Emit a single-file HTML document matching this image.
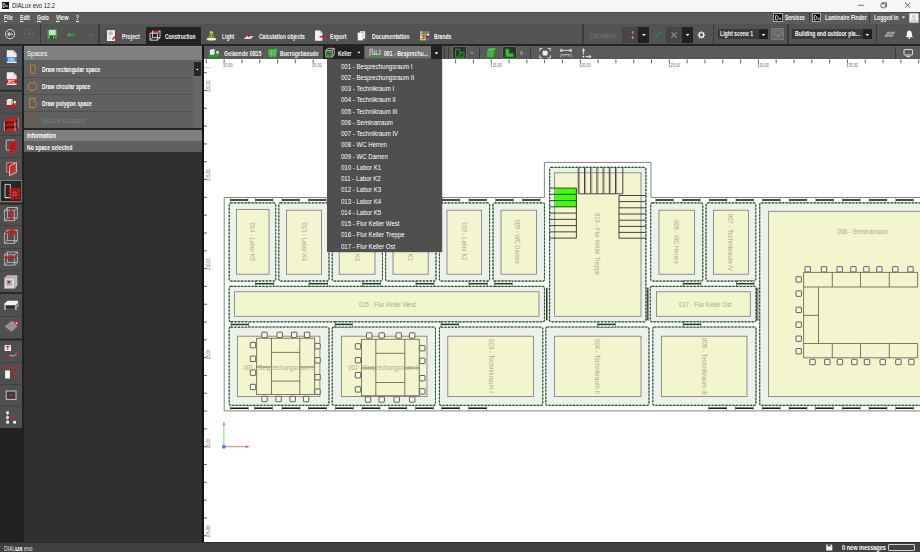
<!DOCTYPE html>
<html lang="en"><head><meta charset="utf-8"><title>DIALux evo 12.2</title>
<style>
html,body{margin:0;padding:0;}
body{width:920px;height:552px;overflow:hidden;position:relative;background:#2e2e2e;font-family:"Liberation Sans",sans-serif;}
.b{position:absolute;}
.t{position:absolute;white-space:nowrap;transform-origin:0 50%;}
svg{position:absolute;left:0;top:0;overflow:visible;}
u{text-decoration:underline;}
</style></head><body>
<div id="canvas" class="b" style="left:203.9px;top:59.3px;width:716.1px;height:482.7px;background:#fff;"></div>
<svg id="plan" width="920" height="552" viewBox="0 0 920 552"><defs><clipPath id="cv"><rect x="203.9" y="59.3" width="716.1" height="482.7"/></clipPath></defs><g clip-path="url(#cv)">
<path d="M224.10 63.3V67.4M313.15 63.3V67.4M402.20 63.3V67.4M491.25 63.3V67.4M580.30 63.3V67.4M669.35 63.3V67.4M758.40 63.3V67.4M847.45 63.3V67.4M936.50 63.3V67.4M206.9 536.15H210.9M206.9 447.10H210.9M206.9 358.05H210.9M206.9 269.00H210.9M206.9 179.95H210.9M206.9 90.90H210.9" stroke="#a4a4a4" stroke-width="1" fill="none"/>
<path d="M188.48 59.4V63.3M206.29 59.4V63.3M224.10 59.4V63.3M241.91 59.4V63.3M259.72 59.4V63.3M277.53 59.4V63.3M295.34 59.4V63.3M313.15 59.4V63.3M330.96 59.4V63.3M348.77 59.4V63.3M366.58 59.4V63.3M384.39 59.4V63.3M402.20 59.4V63.3M420.01 59.4V63.3M437.82 59.4V63.3M455.63 59.4V63.3M473.44 59.4V63.3M491.25 59.4V63.3M509.06 59.4V63.3M526.87 59.4V63.3M544.68 59.4V63.3M562.49 59.4V63.3M580.30 59.4V63.3M598.11 59.4V63.3M615.92 59.4V63.3M633.73 59.4V63.3M651.54 59.4V63.3M669.35 59.4V63.3M687.16 59.4V63.3M704.97 59.4V63.3M722.78 59.4V63.3M740.59 59.4V63.3M758.40 59.4V63.3M776.21 59.4V63.3M794.02 59.4V63.3M811.83 59.4V63.3M829.64 59.4V63.3M847.45 59.4V63.3M865.26 59.4V63.3M883.07 59.4V63.3M900.88 59.4V63.3M918.69 59.4V63.3M936.50 59.4V63.3M203.9 553.56H206.9M203.9 535.75H206.9M203.9 517.94H206.9M203.9 500.13H206.9M203.9 482.32H206.9M203.9 464.51H206.9M203.9 446.70H206.9M203.9 428.89H206.9M203.9 411.08H206.9M203.9 393.27H206.9M203.9 375.46H206.9M203.9 357.65H206.9M203.9 339.84H206.9M203.9 322.03H206.9M203.9 304.22H206.9M203.9 286.41H206.9M203.9 268.60H206.9M203.9 250.79H206.9M203.9 232.98H206.9M203.9 215.17H206.9M203.9 197.36H206.9M203.9 179.55H206.9M203.9 161.74H206.9M203.9 143.93H206.9M203.9 126.12H206.9M203.9 108.31H206.9M203.9 90.50H206.9M203.9 72.69H206.9M203.9 54.88H206.9" stroke="#3a3a3a" stroke-width="0.8" fill="none"/>
<path d="M204 67.7H210.8" stroke="#c4c4c4" stroke-width="0.9"/>
<text x="225.00" y="67.2" font-size="4.5" fill="#707070" textLength="7.6" lengthAdjust="spacingAndGlyphs">0,00</text>
<text x="314.05" y="67.2" font-size="4.5" fill="#707070" textLength="7.6" lengthAdjust="spacingAndGlyphs">5,00</text>
<text x="403.10" y="67.2" font-size="4.5" fill="#707070" textLength="9.6" lengthAdjust="spacingAndGlyphs">10,00</text>
<text x="492.15" y="67.2" font-size="4.5" fill="#707070" textLength="9.6" lengthAdjust="spacingAndGlyphs">15,00</text>
<text x="581.20" y="67.2" font-size="4.5" fill="#707070" textLength="9.6" lengthAdjust="spacingAndGlyphs">20,00</text>
<text x="670.25" y="67.2" font-size="4.5" fill="#707070" textLength="9.6" lengthAdjust="spacingAndGlyphs">25,00</text>
<text x="759.30" y="67.2" font-size="4.5" fill="#707070" textLength="9.6" lengthAdjust="spacingAndGlyphs">30,00</text>
<text x="848.35" y="67.2" font-size="4.5" fill="#707070" textLength="9.6" lengthAdjust="spacingAndGlyphs">35,00</text>
<text x="937.40" y="67.2" font-size="4.5" fill="#707070" textLength="9.6" lengthAdjust="spacingAndGlyphs">40,00</text>
<text transform="translate(210.3 535.15) rotate(-90)" font-size="4.5" fill="#707070" textLength="9.6" lengthAdjust="spacingAndGlyphs">-5,00</text>
<text transform="translate(210.3 446.10) rotate(-90)" font-size="4.5" fill="#707070" textLength="7.6" lengthAdjust="spacingAndGlyphs">0,00</text>
<text transform="translate(210.3 357.05) rotate(-90)" font-size="4.5" fill="#707070" textLength="7.6" lengthAdjust="spacingAndGlyphs">5,00</text>
<text transform="translate(210.3 268.00) rotate(-90)" font-size="4.5" fill="#707070" textLength="9.6" lengthAdjust="spacingAndGlyphs">10,00</text>
<text transform="translate(210.3 178.95) rotate(-90)" font-size="4.5" fill="#707070" textLength="9.6" lengthAdjust="spacingAndGlyphs">15,00</text>
<text transform="translate(210.3 89.90) rotate(-90)" font-size="4.5" fill="#707070" textLength="9.6" lengthAdjust="spacingAndGlyphs">20,00</text>
<path d="M224.2 197.5H544.4V162.4H651V197.5H925V410.9H224.2Z" fill="#fff" stroke="#858585" stroke-width="1"/>
<path d="M230.30 197.30V202.50M247.90 197.30V202.50" stroke="#888" stroke-width="0.7" fill="none"/>
<path d="M230.30 200.00H247.90" stroke="#111" stroke-width="1.5" fill="none"/>
<path d="M255.30 197.30V202.50M272.90 197.30V202.50" stroke="#888" stroke-width="0.7" fill="none"/>
<path d="M255.30 200.00H272.90" stroke="#111" stroke-width="1.5" fill="none"/>
<path d="M282.00 197.30V202.50M299.60 197.30V202.50" stroke="#888" stroke-width="0.7" fill="none"/>
<path d="M282.00 200.00H299.60" stroke="#111" stroke-width="1.5" fill="none"/>
<path d="M308.50 197.30V202.50M326.10 197.30V202.50" stroke="#888" stroke-width="0.7" fill="none"/>
<path d="M308.50 200.00H326.10" stroke="#111" stroke-width="1.5" fill="none"/>
<path d="M335.30 197.30V202.50M352.90 197.30V202.50" stroke="#888" stroke-width="0.7" fill="none"/>
<path d="M335.30 200.00H352.90" stroke="#111" stroke-width="1.5" fill="none"/>
<path d="M362.00 197.30V202.50M379.60 197.30V202.50" stroke="#888" stroke-width="0.7" fill="none"/>
<path d="M362.00 200.00H379.60" stroke="#111" stroke-width="1.5" fill="none"/>
<path d="M388.80 197.30V202.50M406.40 197.30V202.50" stroke="#888" stroke-width="0.7" fill="none"/>
<path d="M388.80 200.00H406.40" stroke="#111" stroke-width="1.5" fill="none"/>
<path d="M415.50 197.30V202.50M433.10 197.30V202.50" stroke="#888" stroke-width="0.7" fill="none"/>
<path d="M415.50 200.00H433.10" stroke="#111" stroke-width="1.5" fill="none"/>
<path d="M442.20 197.30V202.50M459.80 197.30V202.50" stroke="#888" stroke-width="0.7" fill="none"/>
<path d="M442.20 200.00H459.80" stroke="#111" stroke-width="1.5" fill="none"/>
<path d="M469.00 197.30V202.50M486.60 197.30V202.50" stroke="#888" stroke-width="0.7" fill="none"/>
<path d="M469.00 200.00H486.60" stroke="#111" stroke-width="1.5" fill="none"/>
<path d="M495.70 197.30V202.50M513.30 197.30V202.50" stroke="#888" stroke-width="0.7" fill="none"/>
<path d="M495.70 200.00H513.30" stroke="#111" stroke-width="1.5" fill="none"/>
<path d="M522.50 197.30V202.50M540.10 197.30V202.50" stroke="#888" stroke-width="0.7" fill="none"/>
<path d="M522.50 200.00H540.10" stroke="#111" stroke-width="1.5" fill="none"/>
<path d="M655.80 197.30V202.50M673.40 197.30V202.50" stroke="#888" stroke-width="0.7" fill="none"/>
<path d="M655.80 200.00H673.40" stroke="#111" stroke-width="1.5" fill="none"/>
<path d="M682.60 197.30V202.50M700.20 197.30V202.50" stroke="#888" stroke-width="0.7" fill="none"/>
<path d="M682.60 200.00H700.20" stroke="#111" stroke-width="1.5" fill="none"/>
<path d="M709.30 197.30V202.50M726.90 197.30V202.50" stroke="#888" stroke-width="0.7" fill="none"/>
<path d="M709.30 200.00H726.90" stroke="#111" stroke-width="1.5" fill="none"/>
<path d="M736.00 197.30V202.50M753.60 197.30V202.50" stroke="#888" stroke-width="0.7" fill="none"/>
<path d="M736.00 200.00H753.60" stroke="#111" stroke-width="1.5" fill="none"/>
<path d="M762.60 197.30V202.50M780.20 197.30V202.50" stroke="#888" stroke-width="0.7" fill="none"/>
<path d="M762.60 200.00H780.20" stroke="#111" stroke-width="1.5" fill="none"/>
<path d="M789.20 197.30V202.50M806.80 197.30V202.50" stroke="#888" stroke-width="0.7" fill="none"/>
<path d="M789.20 200.00H806.80" stroke="#111" stroke-width="1.5" fill="none"/>
<path d="M815.90 197.30V202.50M833.50 197.30V202.50" stroke="#888" stroke-width="0.7" fill="none"/>
<path d="M815.90 200.00H833.50" stroke="#111" stroke-width="1.5" fill="none"/>
<path d="M842.50 197.30V202.50M860.10 197.30V202.50" stroke="#888" stroke-width="0.7" fill="none"/>
<path d="M842.50 200.00H860.10" stroke="#111" stroke-width="1.5" fill="none"/>
<path d="M869.20 197.30V202.50M886.80 197.30V202.50" stroke="#888" stroke-width="0.7" fill="none"/>
<path d="M869.20 200.00H886.80" stroke="#111" stroke-width="1.5" fill="none"/>
<path d="M895.80 197.30V202.50M913.40 197.30V202.50" stroke="#888" stroke-width="0.7" fill="none"/>
<path d="M895.80 200.00H913.40" stroke="#111" stroke-width="1.5" fill="none"/>
<path d="M230.30 405.30V410.90M248.30 405.30V410.90" stroke="#888" stroke-width="0.7" fill="none"/>
<path d="M230.30 408.20H248.30" stroke="#111" stroke-width="1.5" fill="none"/>
<path d="M254.50 405.30V410.90M272.50 405.30V410.90" stroke="#888" stroke-width="0.7" fill="none"/>
<path d="M254.50 408.20H272.50" stroke="#111" stroke-width="1.5" fill="none"/>
<path d="M282.00 405.30V410.90M300.00 405.30V410.90" stroke="#888" stroke-width="0.7" fill="none"/>
<path d="M282.00 408.20H300.00" stroke="#111" stroke-width="1.5" fill="none"/>
<path d="M308.50 405.30V410.90M326.50 405.30V410.90" stroke="#888" stroke-width="0.7" fill="none"/>
<path d="M308.50 408.20H326.50" stroke="#111" stroke-width="1.5" fill="none"/>
<path d="M335.30 405.30V410.90M353.30 405.30V410.90" stroke="#888" stroke-width="0.7" fill="none"/>
<path d="M335.30 408.20H353.30" stroke="#111" stroke-width="1.5" fill="none"/>
<path d="M362.00 405.30V410.90M380.00 405.30V410.90" stroke="#888" stroke-width="0.7" fill="none"/>
<path d="M362.00 408.20H380.00" stroke="#111" stroke-width="1.5" fill="none"/>
<path d="M388.80 405.30V410.90M406.80 405.30V410.90" stroke="#888" stroke-width="0.7" fill="none"/>
<path d="M388.80 408.20H406.80" stroke="#111" stroke-width="1.5" fill="none"/>
<path d="M415.50 405.30V410.90M433.50 405.30V410.90" stroke="#888" stroke-width="0.7" fill="none"/>
<path d="M415.50 408.20H433.50" stroke="#111" stroke-width="1.5" fill="none"/>
<path d="M441.60 405.30V410.90M459.60 405.30V410.90" stroke="#888" stroke-width="0.7" fill="none"/>
<path d="M441.60 408.20H459.60" stroke="#111" stroke-width="1.5" fill="none"/>
<path d="M468.60 405.30V410.90M486.60 405.30V410.90" stroke="#888" stroke-width="0.7" fill="none"/>
<path d="M468.60 408.20H486.60" stroke="#111" stroke-width="1.5" fill="none"/>
<path d="M708.60 405.30V410.90M726.60 405.30V410.90" stroke="#888" stroke-width="0.7" fill="none"/>
<path d="M708.60 408.20H726.60" stroke="#111" stroke-width="1.5" fill="none"/>
<path d="M735.30 405.30V410.90M753.30 405.30V410.90" stroke="#888" stroke-width="0.7" fill="none"/>
<path d="M735.30 408.20H753.30" stroke="#111" stroke-width="1.5" fill="none"/>
<path d="M762.30 405.30V410.90M780.30 405.30V410.90" stroke="#888" stroke-width="0.7" fill="none"/>
<path d="M762.30 408.20H780.30" stroke="#111" stroke-width="1.5" fill="none"/>
<path d="M789.00 405.30V410.90M807.00 405.30V410.90" stroke="#888" stroke-width="0.7" fill="none"/>
<path d="M789.00 408.20H807.00" stroke="#111" stroke-width="1.5" fill="none"/>
<path d="M815.40 405.30V410.90M833.40 405.30V410.90" stroke="#888" stroke-width="0.7" fill="none"/>
<path d="M815.40 408.20H833.40" stroke="#111" stroke-width="1.5" fill="none"/>
<path d="M842.30 405.30V410.90M860.30 405.30V410.90" stroke="#888" stroke-width="0.7" fill="none"/>
<path d="M842.30 408.20H860.30" stroke="#111" stroke-width="1.5" fill="none"/>
<path d="M869.00 405.30V410.90M887.00 405.30V410.90" stroke="#888" stroke-width="0.7" fill="none"/>
<path d="M869.00 408.20H887.00" stroke="#111" stroke-width="1.5" fill="none"/>
<path d="M895.70 405.30V410.90M913.70 405.30V410.90" stroke="#888" stroke-width="0.7" fill="none"/>
<path d="M895.70 408.20H913.70" stroke="#111" stroke-width="1.5" fill="none"/>
<rect x="229.2" y="202.9" width="46.50" height="78.20" rx="1.6" fill="#edf1ec" stroke="#7c7c7c" stroke-width="0.8"/>
<rect x="229.2" y="202.9" width="46.50" height="78.20" rx="1.6" fill="none" stroke="#126012" stroke-width="1.15" stroke-dasharray="1.9 1.6"/>
<rect x="236.4" y="209.5" width="32.60" height="64.70" fill="#f3f5cf" stroke="#777" stroke-width="0.8"/>
<rect x="278.8" y="202.9" width="50.20" height="78.20" rx="1.6" fill="#edf1ec" stroke="#7c7c7c" stroke-width="0.8"/>
<rect x="278.8" y="202.9" width="50.20" height="78.20" rx="1.6" fill="none" stroke="#126012" stroke-width="1.15" stroke-dasharray="1.9 1.6"/>
<rect x="286.5" y="210.2" width="35.00" height="64.00" fill="#f3f5cf" stroke="#777" stroke-width="0.8"/>
<rect x="332.2" y="202.9" width="50.30" height="78.20" rx="1.6" fill="#edf1ec" stroke="#7c7c7c" stroke-width="0.8"/>
<rect x="332.2" y="202.9" width="50.30" height="78.20" rx="1.6" fill="none" stroke="#126012" stroke-width="1.15" stroke-dasharray="1.9 1.6"/>
<rect x="339.2" y="210.2" width="35.80" height="64.00" fill="#f3f5cf" stroke="#777" stroke-width="0.8"/>
<rect x="385.6" y="202.9" width="50.40" height="78.20" rx="1.6" fill="#edf1ec" stroke="#7c7c7c" stroke-width="0.8"/>
<rect x="385.6" y="202.9" width="50.40" height="78.20" rx="1.6" fill="none" stroke="#126012" stroke-width="1.15" stroke-dasharray="1.9 1.6"/>
<rect x="393" y="210.2" width="35.20" height="64.00" fill="#f3f5cf" stroke="#777" stroke-width="0.8"/>
<rect x="439.4" y="202.9" width="50.20" height="78.20" rx="1.6" fill="#edf1ec" stroke="#7c7c7c" stroke-width="0.8"/>
<rect x="439.4" y="202.9" width="50.20" height="78.20" rx="1.6" fill="none" stroke="#126012" stroke-width="1.15" stroke-dasharray="1.9 1.6"/>
<rect x="447" y="210.2" width="34.60" height="64.00" fill="#f3f5cf" stroke="#777" stroke-width="0.8"/>
<rect x="493" y="202.9" width="51.50" height="78.20" rx="1.6" fill="#edf1ec" stroke="#7c7c7c" stroke-width="0.8"/>
<rect x="493" y="202.9" width="51.50" height="78.20" rx="1.6" fill="none" stroke="#126012" stroke-width="1.15" stroke-dasharray="1.9 1.6"/>
<rect x="501" y="210.2" width="35.60" height="64.00" fill="#f3f5cf" stroke="#777" stroke-width="0.8"/>
<rect x="650.7" y="202.9" width="52.10" height="78.20" rx="1.6" fill="#edf1ec" stroke="#7c7c7c" stroke-width="0.8"/>
<rect x="650.7" y="202.9" width="52.10" height="78.20" rx="1.6" fill="none" stroke="#126012" stroke-width="1.15" stroke-dasharray="1.9 1.6"/>
<rect x="659" y="210.2" width="35.60" height="64.00" fill="#f3f5cf" stroke="#777" stroke-width="0.8"/>
<rect x="706" y="202.9" width="49.80" height="78.20" rx="1.6" fill="#edf1ec" stroke="#7c7c7c" stroke-width="0.8"/>
<rect x="706" y="202.9" width="49.80" height="78.20" rx="1.6" fill="none" stroke="#126012" stroke-width="1.15" stroke-dasharray="1.9 1.6"/>
<rect x="713.6" y="210.2" width="35.00" height="64.00" fill="#f3f5cf" stroke="#777" stroke-width="0.8"/>
<rect x="229.2" y="286.3" width="315.30" height="35.50" rx="1.6" fill="#edf1ec" stroke="#7c7c7c" stroke-width="0.8"/>
<rect x="229.2" y="286.3" width="315.30" height="35.50" rx="1.6" fill="none" stroke="#126012" stroke-width="1.15" stroke-dasharray="1.9 1.6"/>
<rect x="234.6" y="291.8" width="304.40" height="24.50" fill="#f3f5cf" stroke="#777" stroke-width="0.8"/>
<rect x="549.6" y="167.3" width="96.30" height="154.50" rx="1.6" fill="#edf1ec" stroke="#7c7c7c" stroke-width="0.8"/>
<rect x="549.6" y="167.3" width="96.30" height="154.50" rx="1.6" fill="none" stroke="#126012" stroke-width="1.15" stroke-dasharray="1.9 1.6"/>
<rect x="554.7" y="172.8" width="86.30" height="143.50" fill="#f3f5cf" stroke="#777" stroke-width="0.8"/>
<rect x="650.3" y="286.3" width="105.70" height="35.50" rx="1.6" fill="#edf1ec" stroke="#7c7c7c" stroke-width="0.8"/>
<rect x="650.3" y="286.3" width="105.70" height="35.50" rx="1.6" fill="none" stroke="#126012" stroke-width="1.15" stroke-dasharray="1.9 1.6"/>
<rect x="656.6" y="291.8" width="93.70" height="24.50" fill="#f3f5cf" stroke="#777" stroke-width="0.8"/>
<rect x="229.2" y="327" width="99.80" height="78.30" rx="1.6" fill="#edf1ec" stroke="#7c7c7c" stroke-width="0.8"/>
<rect x="229.2" y="327" width="99.80" height="78.30" rx="1.6" fill="none" stroke="#126012" stroke-width="1.15" stroke-dasharray="1.9 1.6"/>
<rect x="237.6" y="336.2" width="82.30" height="60.40" fill="#f3f5cf" stroke="#777" stroke-width="0.8"/>
<rect x="332.2" y="327" width="103.30" height="78.30" rx="1.6" fill="#edf1ec" stroke="#7c7c7c" stroke-width="0.8"/>
<rect x="332.2" y="327" width="103.30" height="78.30" rx="1.6" fill="none" stroke="#126012" stroke-width="1.15" stroke-dasharray="1.9 1.6"/>
<rect x="341.5" y="336.2" width="85.50" height="60.40" fill="#f3f5cf" stroke="#777" stroke-width="0.8"/>
<rect x="439.4" y="327" width="103.40" height="78.30" rx="1.6" fill="#edf1ec" stroke="#7c7c7c" stroke-width="0.8"/>
<rect x="439.4" y="327" width="103.40" height="78.30" rx="1.6" fill="none" stroke="#126012" stroke-width="1.15" stroke-dasharray="1.9 1.6"/>
<rect x="447.8" y="336.2" width="85.80" height="60.40" fill="#f3f5cf" stroke="#777" stroke-width="0.8"/>
<rect x="545.8" y="327" width="103.20" height="78.30" rx="1.6" fill="#edf1ec" stroke="#7c7c7c" stroke-width="0.8"/>
<rect x="545.8" y="327" width="103.20" height="78.30" rx="1.6" fill="none" stroke="#126012" stroke-width="1.15" stroke-dasharray="1.9 1.6"/>
<rect x="554.6" y="336.2" width="86.40" height="60.40" fill="#f3f5cf" stroke="#777" stroke-width="0.8"/>
<rect x="652.8" y="327" width="103.20" height="78.30" rx="1.6" fill="#edf1ec" stroke="#7c7c7c" stroke-width="0.8"/>
<rect x="652.8" y="327" width="103.20" height="78.30" rx="1.6" fill="none" stroke="#126012" stroke-width="1.15" stroke-dasharray="1.9 1.6"/>
<rect x="661.5" y="336.2" width="85.50" height="60.40" fill="#f3f5cf" stroke="#777" stroke-width="0.8"/>
<rect x="759.7" y="202.9" width="170.30" height="202.40" rx="1.6" fill="#edf1ec" stroke="#7c7c7c" stroke-width="0.8"/>
<rect x="759.7" y="202.9" width="170.30" height="202.40" rx="1.6" fill="none" stroke="#126012" stroke-width="1.15" stroke-dasharray="1.9 1.6"/>
<rect x="768.4" y="211.3" width="161.60" height="185.30" fill="#f3f5cf" stroke="#777" stroke-width="0.8"/>
<rect x="255.5" y="281.1" width="18.20" height="5.20" fill="#f2f2f2"/>
<path d="M255.5 281.1V286.3M273.7 281.1V286.3" stroke="#666" stroke-width="0.8" fill="none"/>
<path d="M255.5 283.70H273.7" stroke="#333" stroke-width="1.5" fill="none"/>
<path d="M255.5 281.1H273.7M255.5 286.3H273.7" stroke="#126012" stroke-width="1.15" stroke-dasharray="1.9 1.6" fill="none"/>
<rect x="309" y="281.1" width="18.60" height="5.20" fill="#f2f2f2"/>
<path d="M309 281.1V286.3M327.6 281.1V286.3" stroke="#666" stroke-width="0.8" fill="none"/>
<path d="M309 283.70H327.6" stroke="#333" stroke-width="1.5" fill="none"/>
<path d="M309 281.1H327.6M309 286.3H327.6" stroke="#126012" stroke-width="1.15" stroke-dasharray="1.9 1.6" fill="none"/>
<rect x="362.6" y="281.1" width="17.80" height="5.20" fill="#f2f2f2"/>
<path d="M362.6 281.1V286.3M380.4 281.1V286.3" stroke="#666" stroke-width="0.8" fill="none"/>
<path d="M362.6 283.70H380.4" stroke="#333" stroke-width="1.5" fill="none"/>
<path d="M362.6 281.1H380.4M362.6 286.3H380.4" stroke="#126012" stroke-width="1.15" stroke-dasharray="1.9 1.6" fill="none"/>
<rect x="416" y="281.1" width="18.00" height="5.20" fill="#f2f2f2"/>
<path d="M416 281.1V286.3M434 281.1V286.3" stroke="#666" stroke-width="0.8" fill="none"/>
<path d="M416 283.70H434" stroke="#333" stroke-width="1.5" fill="none"/>
<path d="M416 281.1H434M416 286.3H434" stroke="#126012" stroke-width="1.15" stroke-dasharray="1.9 1.6" fill="none"/>
<rect x="469" y="281.1" width="18.30" height="5.20" fill="#f2f2f2"/>
<path d="M469 281.1V286.3M487.3 281.1V286.3" stroke="#666" stroke-width="0.8" fill="none"/>
<path d="M469 283.70H487.3" stroke="#333" stroke-width="1.5" fill="none"/>
<path d="M469 281.1H487.3M469 286.3H487.3" stroke="#126012" stroke-width="1.15" stroke-dasharray="1.9 1.6" fill="none"/>
<rect x="494.7" y="281.1" width="17.50" height="5.20" fill="#f2f2f2"/>
<path d="M494.7 281.1V286.3M512.2 281.1V286.3" stroke="#666" stroke-width="0.8" fill="none"/>
<path d="M494.7 283.70H512.2" stroke="#333" stroke-width="1.5" fill="none"/>
<path d="M494.7 281.1H512.2M494.7 286.3H512.2" stroke="#126012" stroke-width="1.15" stroke-dasharray="1.9 1.6" fill="none"/>
<rect x="683.2" y="281.1" width="17.60" height="5.20" fill="#f2f2f2"/>
<path d="M683.2 281.1V286.3M700.8 281.1V286.3" stroke="#666" stroke-width="0.8" fill="none"/>
<path d="M683.2 283.70H700.8" stroke="#333" stroke-width="1.5" fill="none"/>
<path d="M683.2 281.1H700.8M683.2 286.3H700.8" stroke="#126012" stroke-width="1.15" stroke-dasharray="1.9 1.6" fill="none"/>
<rect x="736.5" y="281.1" width="17.50" height="5.20" fill="#f2f2f2"/>
<path d="M736.5 281.1V286.3M754 281.1V286.3" stroke="#666" stroke-width="0.8" fill="none"/>
<path d="M736.5 283.70H754" stroke="#333" stroke-width="1.5" fill="none"/>
<path d="M736.5 281.1H754M736.5 286.3H754" stroke="#126012" stroke-width="1.15" stroke-dasharray="1.9 1.6" fill="none"/>
<rect x="231" y="321.8" width="17.60" height="5.20" fill="#f2f2f2"/>
<path d="M231 321.8V327M248.6 321.8V327" stroke="#666" stroke-width="0.8" fill="none"/>
<path d="M231 324.40H248.6" stroke="#333" stroke-width="1.5" fill="none"/>
<path d="M231 321.8H248.6M231 327H248.6" stroke="#126012" stroke-width="1.15" stroke-dasharray="1.9 1.6" fill="none"/>
<rect x="335" y="321.8" width="17.30" height="5.20" fill="#f2f2f2"/>
<path d="M335 321.8V327M352.3 321.8V327" stroke="#666" stroke-width="0.8" fill="none"/>
<path d="M335 324.40H352.3" stroke="#333" stroke-width="1.5" fill="none"/>
<path d="M335 321.8H352.3M335 327H352.3" stroke="#126012" stroke-width="1.15" stroke-dasharray="1.9 1.6" fill="none"/>
<rect x="441" y="321.8" width="17.60" height="5.20" fill="#f2f2f2"/>
<path d="M441 321.8V327M458.6 321.8V327" stroke="#666" stroke-width="0.8" fill="none"/>
<path d="M441 324.40H458.6" stroke="#333" stroke-width="1.5" fill="none"/>
<path d="M441 321.8H458.6M441 327H458.6" stroke="#126012" stroke-width="1.15" stroke-dasharray="1.9 1.6" fill="none"/>
<rect x="597.7" y="321.8" width="17.60" height="5.20" fill="#f2f2f2"/>
<path d="M597.7 321.8V327M615.3 321.8V327" stroke="#666" stroke-width="0.8" fill="none"/>
<path d="M597.7 324.40H615.3" stroke="#333" stroke-width="1.5" fill="none"/>
<path d="M597.7 321.8H615.3M597.7 327H615.3" stroke="#126012" stroke-width="1.15" stroke-dasharray="1.9 1.6" fill="none"/>
<rect x="683.2" y="321.8" width="17.60" height="5.20" fill="#f2f2f2"/>
<path d="M683.2 321.8V327M700.8 321.8V327" stroke="#666" stroke-width="0.8" fill="none"/>
<path d="M683.2 324.40H700.8" stroke="#333" stroke-width="1.5" fill="none"/>
<path d="M683.2 321.8H700.8M683.2 327H700.8" stroke="#126012" stroke-width="1.15" stroke-dasharray="1.9 1.6" fill="none"/>
<path d="M545.6 288.2H548.6M545.6 320H548.6" stroke="#666" stroke-width="0.8" fill="none"/>
<path d="M546.60 288.2V320" stroke="#222" stroke-width="1.1" fill="none"/>
<path d="M547.70 288.2V320" stroke="#8a8a8a" stroke-width="1" fill="none"/>
<path d="M646.1 288.2H649.5M646.1 320H649.5" stroke="#666" stroke-width="0.8" fill="none"/>
<path d="M647.30 288.2V320" stroke="#222" stroke-width="1.1" fill="none"/>
<path d="M648.40 288.2V320" stroke="#8a8a8a" stroke-width="1" fill="none"/>
<path d="M755.8 288.2H759.1M755.8 320H759.1" stroke="#666" stroke-width="0.8" fill="none"/>
<path d="M756.95 288.2V320" stroke="#222" stroke-width="1.1" fill="none"/>
<path d="M758.05 288.2V320" stroke="#8a8a8a" stroke-width="1" fill="none"/>
<rect x="555.2" y="188.2" width="21.2" height="18.8" fill="#3fff00"/>
<path d="M549.6 188.10H576.4M549.6 194.35H576.4M549.6 200.60H576.4M549.6 206.85H576.4M549.6 213.10H576.4M549.6 219.35H576.4M549.6 225.60H576.4M549.6 231.85H576.4M549.6 238.10H576.4M576.4 188.1V238.1M578.30 167.3V193.8M584.50 167.3V193.8M590.70 167.3V193.8M596.90 167.3V193.8M603.10 167.3V193.8M609.30 167.3V193.8M615.50 167.3V193.8M622.8 167.3V193.8M578.3 193.8H622.8M619 195.5H645.9M619 201.6H645.9M619 207.8H645.9M619 214H645.9M619 220.2H645.9M619 226.4H645.9M619 232.4H645.9M619 238.2H645.9M619 195.5V238.2" stroke="#303030" stroke-width="0.9" fill="none"/>
<path d="M579.40 167.3V193.8M585.60 167.3V193.8M591.80 167.3V193.8M598.00 167.3V193.8M604.20 167.3V193.8M610.40 167.3V193.8M616.60 167.3V193.8" stroke="#8a8a8a" stroke-width="0.8" fill="none"/>
<rect x="261.80" y="332.20" width="5.4" height="5.4" rx="0.5" fill="#f6f6ea" stroke="#48483c" stroke-width="0.85"/>
<rect x="277.00" y="332.20" width="5.4" height="5.4" rx="0.5" fill="#f6f6ea" stroke="#48483c" stroke-width="0.85"/>
<rect x="291.50" y="332.20" width="5.4" height="5.4" rx="0.5" fill="#f6f6ea" stroke="#48483c" stroke-width="0.85"/>
<rect x="304.40" y="332.20" width="5.4" height="5.4" rx="0.5" fill="#f6f6ea" stroke="#48483c" stroke-width="0.85"/>
<rect x="250.30" y="342.40" width="5.4" height="5.4" rx="0.5" fill="#f6f6ea" stroke="#48483c" stroke-width="0.85"/>
<rect x="250.30" y="356.10" width="5.4" height="5.4" rx="0.5" fill="#f6f6ea" stroke="#48483c" stroke-width="0.85"/>
<rect x="250.30" y="370.00" width="5.4" height="5.4" rx="0.5" fill="#f6f6ea" stroke="#48483c" stroke-width="0.85"/>
<rect x="250.30" y="384.30" width="5.4" height="5.4" rx="0.5" fill="#f6f6ea" stroke="#48483c" stroke-width="0.85"/>
<rect x="314.80" y="343.40" width="5.4" height="5.4" rx="0.5" fill="#f6f6ea" stroke="#48483c" stroke-width="0.85"/>
<rect x="314.80" y="357.60" width="5.4" height="5.4" rx="0.5" fill="#f6f6ea" stroke="#48483c" stroke-width="0.85"/>
<rect x="314.80" y="374.50" width="5.4" height="5.4" rx="0.5" fill="#f6f6ea" stroke="#48483c" stroke-width="0.85"/>
<rect x="314.80" y="389.00" width="5.4" height="5.4" rx="0.5" fill="#f6f6ea" stroke="#48483c" stroke-width="0.85"/>
<rect x="261.80" y="396.30" width="5.4" height="5.4" rx="0.5" fill="#f6f6ea" stroke="#48483c" stroke-width="0.85"/>
<rect x="275.90" y="396.30" width="5.4" height="5.4" rx="0.5" fill="#f6f6ea" stroke="#48483c" stroke-width="0.85"/>
<rect x="290.00" y="396.30" width="5.4" height="5.4" rx="0.5" fill="#f6f6ea" stroke="#48483c" stroke-width="0.85"/>
<rect x="303.40" y="396.30" width="5.4" height="5.4" rx="0.5" fill="#f6f6ea" stroke="#48483c" stroke-width="0.85"/>
<rect x="256.7" y="338.2" width="58.00" height="56.40" fill="#f3f5cf" stroke="#5a5a4a" stroke-width="0.8"/>
<path d="M271.5 338.2V394.6M299.8 338.2V394.6M271.5 352.4H299.8M271.5 381.1H299.8M256.7 367H271.5M299.8 367H314.7" stroke="#5a5a4a" stroke-width="0.8" fill="none"/>
<rect x="366.50" y="332.80" width="5.4" height="5.4" rx="0.5" fill="#f6f6ea" stroke="#48483c" stroke-width="0.85"/>
<rect x="379.00" y="332.80" width="5.4" height="5.4" rx="0.5" fill="#f6f6ea" stroke="#48483c" stroke-width="0.85"/>
<rect x="396.00" y="332.80" width="5.4" height="5.4" rx="0.5" fill="#f6f6ea" stroke="#48483c" stroke-width="0.85"/>
<rect x="409.50" y="332.80" width="5.4" height="5.4" rx="0.5" fill="#f6f6ea" stroke="#48483c" stroke-width="0.85"/>
<rect x="355.30" y="343.70" width="5.4" height="5.4" rx="0.5" fill="#f6f6ea" stroke="#48483c" stroke-width="0.85"/>
<rect x="355.30" y="357.50" width="5.4" height="5.4" rx="0.5" fill="#f6f6ea" stroke="#48483c" stroke-width="0.85"/>
<rect x="355.30" y="372.50" width="5.4" height="5.4" rx="0.5" fill="#f6f6ea" stroke="#48483c" stroke-width="0.85"/>
<rect x="355.30" y="386.70" width="5.4" height="5.4" rx="0.5" fill="#f6f6ea" stroke="#48483c" stroke-width="0.85"/>
<rect x="419.60" y="345.50" width="5.4" height="5.4" rx="0.5" fill="#f6f6ea" stroke="#48483c" stroke-width="0.85"/>
<rect x="419.60" y="358.20" width="5.4" height="5.4" rx="0.5" fill="#f6f6ea" stroke="#48483c" stroke-width="0.85"/>
<rect x="419.60" y="375.50" width="5.4" height="5.4" rx="0.5" fill="#f6f6ea" stroke="#48483c" stroke-width="0.85"/>
<rect x="419.60" y="388.70" width="5.4" height="5.4" rx="0.5" fill="#f6f6ea" stroke="#48483c" stroke-width="0.85"/>
<rect x="365.30" y="396.80" width="5.4" height="5.4" rx="0.5" fill="#f6f6ea" stroke="#48483c" stroke-width="0.85"/>
<rect x="379.00" y="396.80" width="5.4" height="5.4" rx="0.5" fill="#f6f6ea" stroke="#48483c" stroke-width="0.85"/>
<rect x="394.00" y="396.80" width="5.4" height="5.4" rx="0.5" fill="#f6f6ea" stroke="#48483c" stroke-width="0.85"/>
<rect x="409.50" y="396.80" width="5.4" height="5.4" rx="0.5" fill="#f6f6ea" stroke="#48483c" stroke-width="0.85"/>
<rect x="361.6" y="339.2" width="57.60" height="56.60" fill="#f3f5cf" stroke="#5a5a4a" stroke-width="0.8"/>
<path d="M375.8 339.2V395.8M404.8 339.2V395.8M375.8 353.3H404.8M375.8 382.5H404.8M361.6 368H375.8M404.8 368H419.2" stroke="#5a5a4a" stroke-width="0.8" fill="none"/>
<rect x="805.00" y="266.60" width="5.4" height="5.4" rx="0.5" fill="#f6f6ea" stroke="#48483c" stroke-width="0.85"/>
<rect x="821.30" y="266.60" width="5.4" height="5.4" rx="0.5" fill="#f6f6ea" stroke="#48483c" stroke-width="0.85"/>
<rect x="837.00" y="266.60" width="5.4" height="5.4" rx="0.5" fill="#f6f6ea" stroke="#48483c" stroke-width="0.85"/>
<rect x="850.70" y="266.60" width="5.4" height="5.4" rx="0.5" fill="#f6f6ea" stroke="#48483c" stroke-width="0.85"/>
<rect x="863.70" y="266.60" width="5.4" height="5.4" rx="0.5" fill="#f6f6ea" stroke="#48483c" stroke-width="0.85"/>
<rect x="876.70" y="266.60" width="5.4" height="5.4" rx="0.5" fill="#f6f6ea" stroke="#48483c" stroke-width="0.85"/>
<rect x="892.60" y="266.60" width="5.4" height="5.4" rx="0.5" fill="#f6f6ea" stroke="#48483c" stroke-width="0.85"/>
<rect x="907.80" y="266.60" width="5.4" height="5.4" rx="0.5" fill="#f6f6ea" stroke="#48483c" stroke-width="0.85"/>
<rect x="796.00" y="276.70" width="5.4" height="5.4" rx="0.5" fill="#f6f6ea" stroke="#48483c" stroke-width="0.85"/>
<rect x="796.00" y="290.90" width="5.4" height="5.4" rx="0.5" fill="#f6f6ea" stroke="#48483c" stroke-width="0.85"/>
<rect x="796.00" y="307.20" width="5.4" height="5.4" rx="0.5" fill="#f6f6ea" stroke="#48483c" stroke-width="0.85"/>
<rect x="796.00" y="322.00" width="5.4" height="5.4" rx="0.5" fill="#f6f6ea" stroke="#48483c" stroke-width="0.85"/>
<rect x="796.00" y="336.00" width="5.4" height="5.4" rx="0.5" fill="#f6f6ea" stroke="#48483c" stroke-width="0.85"/>
<rect x="796.00" y="348.50" width="5.4" height="5.4" rx="0.5" fill="#f6f6ea" stroke="#48483c" stroke-width="0.85"/>
<rect x="809.80" y="359.30" width="5.4" height="5.4" rx="0.5" fill="#f6f6ea" stroke="#48483c" stroke-width="0.85"/>
<rect x="824.60" y="359.30" width="5.4" height="5.4" rx="0.5" fill="#f6f6ea" stroke="#48483c" stroke-width="0.85"/>
<rect x="837.20" y="359.30" width="5.4" height="5.4" rx="0.5" fill="#f6f6ea" stroke="#48483c" stroke-width="0.85"/>
<rect x="851.70" y="359.30" width="5.4" height="5.4" rx="0.5" fill="#f6f6ea" stroke="#48483c" stroke-width="0.85"/>
<rect x="864.30" y="359.30" width="5.4" height="5.4" rx="0.5" fill="#f6f6ea" stroke="#48483c" stroke-width="0.85"/>
<rect x="880.00" y="359.30" width="5.4" height="5.4" rx="0.5" fill="#f6f6ea" stroke="#48483c" stroke-width="0.85"/>
<rect x="895.70" y="359.30" width="5.4" height="5.4" rx="0.5" fill="#f6f6ea" stroke="#48483c" stroke-width="0.85"/>
<rect x="908.70" y="359.30" width="5.4" height="5.4" rx="0.5" fill="#f6f6ea" stroke="#48483c" stroke-width="0.85"/>
<path d="M803.6 272.4H917.6V287H818.5V343.5H917.6V357.8H803.6Z" fill="#f3f5cf" stroke="#5a5a4a" stroke-width="0.8"/>
<path d="M832.3 272.4V287M860.5 272.4V287M889.3 272.4V287M832.3 343.5V357.8M860.5 343.5V357.8M889.3 343.5V357.8M803.6 287H818.5M803.6 343.5H818.5M803.6 315.4H818.5" stroke="#5a5a4a" stroke-width="0.8" fill="none"/>
<text transform="translate(249.50 222.5) rotate(90)" font-size="6.9" fill="#abac80" textLength="38.50" lengthAdjust="spacingAndGlyphs">014 - Labor K5</text>
<text transform="translate(301.50 222.5) rotate(90)" font-size="6.9" fill="#abac80" textLength="38.50" lengthAdjust="spacingAndGlyphs">013 - Labor K4</text>
<text transform="translate(354.50 222.5) rotate(90)" font-size="6.9" fill="#abac80" textLength="38.50" lengthAdjust="spacingAndGlyphs">012 - Labor K3</text>
<text transform="translate(407.50 222.5) rotate(90)" font-size="6.9" fill="#abac80" textLength="38.50" lengthAdjust="spacingAndGlyphs">011 - Labor K2</text>
<text transform="translate(461.50 222.5) rotate(90)" font-size="6.9" fill="#abac80" textLength="38.00" lengthAdjust="spacingAndGlyphs">010 - Labor K1</text>
<text transform="translate(515.30 219.5) rotate(90)" font-size="6.9" fill="#abac80" textLength="44.30" lengthAdjust="spacingAndGlyphs">009 - WC Damen</text>
<text transform="translate(594.50 213) rotate(90)" font-size="6.9" fill="#abac80" textLength="62.00" lengthAdjust="spacingAndGlyphs">016 - Flur Keller Treppe</text>
<text transform="translate(673.50 220) rotate(90)" font-size="6.9" fill="#abac80" textLength="43.80" lengthAdjust="spacingAndGlyphs">008 - WC Herren</text>
<text transform="translate(728.30 213.8) rotate(90)" font-size="6.9" fill="#abac80" textLength="57.20" lengthAdjust="spacingAndGlyphs">007 - Technikraum IV</text>
<text x="359" y="306.50" font-size="6.9" fill="#abac80" textLength="57.00" lengthAdjust="spacingAndGlyphs">015 - Flur Keller West</text>
<text x="679" y="306.50" font-size="6.9" fill="#abac80" textLength="52.50" lengthAdjust="spacingAndGlyphs">017 - Flur Keller Ost</text>
<text x="243.5" y="369.50" font-size="6.9" fill="#abac80" textLength="69.50" lengthAdjust="spacingAndGlyphs">001 - Besprechungsraum I</text>
<text x="348.5" y="369.50" font-size="6.9" fill="#abac80" textLength="70.00" lengthAdjust="spacingAndGlyphs">002 - Besprechungsraum II</text>
<text transform="translate(488.50 339) rotate(90)" font-size="6.9" fill="#abac80" textLength="54.00" lengthAdjust="spacingAndGlyphs">003 - Technikraum I</text>
<text transform="translate(594.50 339) rotate(90)" font-size="6.9" fill="#abac80" textLength="55.00" lengthAdjust="spacingAndGlyphs">004 - Technikraum II</text>
<text transform="translate(702.00 338) rotate(90)" font-size="6.9" fill="#abac80" textLength="57.00" lengthAdjust="spacingAndGlyphs">005 - Technikraum III</text>
<text x="837.5" y="233.50" font-size="6.9" fill="#abac80" textLength="50.50" lengthAdjust="spacingAndGlyphs">006 - Seminarraum</text>
<path d="M223.9 446.7V423.5" stroke="#86c86a" stroke-width="0.9"/><path d="M222.3 425.6L223.9 421.2L225.5 425.6Z" fill="#86c86a"/>
<path d="M223.9 446.7H247" stroke="#e46a6a" stroke-width="0.9"/><path d="M245.6 445.2L249.8 446.7L245.6 448.2Z" fill="#e46a6a"/>
<circle cx="223.9" cy="446.7" r="2" fill="#3c86f0"/>
</g></svg>
<div id="titlebar" class="b" style="left:0;top:0;width:920px;height:11.5px;background:#f6f6f6;">
<div class="b" style="left:1.60px;top:2.20px;width:7.20px;height:6.60px;background:#0a0a0a;"></div>
<svg width="20" height="12" viewBox="0 0 20 12"><path d="M3 3.4V7.3H3.9C5.8 7.3 5.8 3.4 3.9 3.4Z" fill="none" stroke="#fff" stroke-width="0.8"/><path d="M6.2 5.2L7.8 7.3M7.8 5.2L6.2 7.3" stroke="#fff" stroke-width="0.6"/></svg>
<span class="t" style="left:12.10px;top:1.80px;font-size:7px;line-height:8.40px;color:#1a1a1a;transform:scaleX(0.8309);">DIALux evo 12.2</span>
<svg width="920" height="12" viewBox="0 0 920 12"><g stroke="#333" stroke-width="0.7" fill="none"><path d="M858 5.3H863.8"/><rect x="881" y="3.6" width="4.4" height="4.2" rx="1"/><path d="M882.2 3.6V2.8H886.5V6.8H885.4"/><path d="M905 2.7L910.2 7.8M910.2 2.7L905 7.8"/></g></svg>
</div>
<div id="menubar" class="b" style="left:0;top:11.5px;width:920px;height:12px;background:#5c5c5c;box-sizing:border-box;border-top:0.6px solid #4a4a4a;">
</div>
<span class="t" style="left:3.50px;top:13.54px;font-size:6.6px;line-height:7.92px;color:#f6f6f6;font-weight:bold;transform:scaleX(0.7697);"><u>F</u>ile</span>
<span class="t" style="left:20.00px;top:13.54px;font-size:6.6px;line-height:7.92px;color:#f6f6f6;font-weight:bold;transform:scaleX(0.7822);"><u>E</u>dit</span>
<span class="t" style="left:36.90px;top:13.54px;font-size:6.6px;line-height:7.92px;color:#f6f6f6;font-weight:bold;transform:scaleX(0.7698);"><u>G</u>oto</span>
<span class="t" style="left:56.00px;top:13.54px;font-size:6.6px;line-height:7.92px;color:#f6f6f6;font-weight:bold;transform:scaleX(0.8378);"><u>V</u>iew</span>
<span class="t" style="left:76.00px;top:13.54px;font-size:6.6px;line-height:7.92px;color:#f6f6f6;font-weight:bold;transform:scaleX(0.6822);"><u>?</u></span>
<div class="b" style="left:808.90px;top:12.50px;width:0.70px;height:10.50px;background:#3a3a3a;"></div>
<div class="b" style="left:869.20px;top:12.50px;width:0.70px;height:10.50px;background:#3a3a3a;"></div>
<div class="b" style="left:773.30px;top:13.30px;width:9.40px;height:8.70px;background:#0c0c0c;box-sizing:border-box;border:0.8px solid #a8a8a8;"></div>
<svg width="920" height="30" viewBox="0 0 920 30"><path d="M775.6 15.6V20H776.6C778.7 20 778.7 15.6 776.6 15.6Z" fill="none" stroke="#fff" stroke-width="0.8"/><path d="M779.2 17.6L780.9 20M780.9 17.6L779.2 20" stroke="#fff" stroke-width="0.6"/></svg>
<div class="b" style="left:812.00px;top:13.30px;width:9.40px;height:8.70px;background:#0c0c0c;box-sizing:border-box;border:0.8px solid #a8a8a8;"></div>
<svg width="920" height="30" viewBox="0 0 920 30"><path d="M814.3 15.6V20H815.3C817.4 20 817.4 15.6 815.3 15.6Z" fill="none" stroke="#fff" stroke-width="0.8"/><path d="M817.9 17.6L819.6 20M819.6 17.6L817.9 20" stroke="#fff" stroke-width="0.6"/></svg>
<span class="t" style="left:785.40px;top:13.54px;font-size:6.6px;line-height:7.92px;color:#f6f6f6;font-weight:bold;transform:scaleX(0.7291);">Services</span>
<span class="t" style="left:824.50px;top:13.54px;font-size:6.6px;line-height:7.92px;color:#f6f6f6;font-weight:bold;transform:scaleX(0.7789);">Luminaire Finder</span>
<span class="t" style="left:873.70px;top:13.54px;font-size:6.6px;line-height:7.92px;color:#f6f6f6;font-weight:bold;transform:scaleX(0.7740);">Logged in</span>
<svg width="920" height="60" viewBox="0 0 920 60"><path d="M901.6 16.6h3.6l-1.8 2z" fill="#eee"/><rect x="909.3" y="13.3" width="9.2" height="9.2" fill="#f2f2f2"/><ellipse cx="913.9" cy="16.6" rx="1.9" ry="2.2" fill="#d2d2d2"/><path d="M910.2 22.5c0-3 1.8-3.7 3.7-3.7s3.7 0.7 3.7 3.7z" fill="#d2d2d2"/></svg>
<div id="toolbar" class="b" style="left:0;top:23.5px;width:920px;height:21px;background:#535353;"></div>
<div class="b" style="left:0.00px;top:44.30px;width:920.00px;height:1.40px;background:#242424;"></div>
<div class="b" style="left:39.80px;top:23.80px;width:1.40px;height:20.40px;background:#3c3c3c;"></div>
<div class="b" style="left:98.30px;top:23.80px;width:1.40px;height:20.40px;background:#3c3c3c;"></div>
<div class="b" style="left:582.40px;top:23.80px;width:1.40px;height:20.40px;background:#3c3c3c;"></div>
<div class="b" style="left:713.10px;top:23.80px;width:1.40px;height:20.40px;background:#3c3c3c;"></div>
<div class="b" style="left:787.30px;top:23.80px;width:1.40px;height:20.40px;background:#3c3c3c;"></div>
<div class="b" style="left:875.60px;top:23.80px;width:1.40px;height:20.40px;background:#3c3c3c;"></div>
<div class="b" style="left:145.70px;top:26.60px;width:55.10px;height:17.40px;background:#232323;"></div>
<span class="t" style="left:122.20px;top:33.34px;font-size:6.6px;line-height:7.92px;color:#f6f6f6;font-weight:bold;transform:scaleX(0.7956);">Project</span>
<span class="t" style="left:165.40px;top:33.34px;font-size:6.6px;line-height:7.92px;color:#f6f6f6;font-weight:bold;transform:scaleX(0.7404);">Construction</span>
<span class="t" style="left:221.50px;top:33.34px;font-size:6.6px;line-height:7.92px;color:#f6f6f6;font-weight:bold;transform:scaleX(0.7504);">Light</span>
<span class="t" style="left:258.90px;top:33.34px;font-size:6.6px;line-height:7.92px;color:#f6f6f6;font-weight:bold;transform:scaleX(0.7586);">Calculation objects</span>
<span class="t" style="left:330.20px;top:33.34px;font-size:6.6px;line-height:7.92px;color:#f6f6f6;font-weight:bold;transform:scaleX(0.7846);">Export</span>
<span class="t" style="left:371.50px;top:33.34px;font-size:6.6px;line-height:7.92px;color:#f6f6f6;font-weight:bold;transform:scaleX(0.7787);">Documentation</span>
<span class="t" style="left:434.30px;top:33.34px;font-size:6.6px;line-height:7.92px;color:#f6f6f6;font-weight:bold;transform:scaleX(0.7652);">Brands</span>
<span class="t" style="left:589.40px;top:31.50px;font-size:6.5px;line-height:7.80px;color:#787878;transform:scaleX(0.8334);">Calculation</span>
<div class="b" style="left:622.00px;top:26.90px;width:16.10px;height:15.70px;background:#454545;"></div>
<div class="b" style="left:638.00px;top:26.90px;width:11.20px;height:15.80px;background:#222;"></div>
<div class="b" style="left:666.10px;top:26.90px;width:15.90px;height:15.70px;background:#454545;"></div>
<div class="b" style="left:682.00px;top:26.90px;width:11.30px;height:15.80px;background:#222;"></div>
<div class="b" style="left:717.60px;top:28.90px;width:41.00px;height:10.40px;background:#3a3a3a;"></div>
<div class="b" style="left:758.60px;top:28.90px;width:9.80px;height:10.40px;background:#222;"></div>
<span class="t" style="left:720.00px;top:30.24px;font-size:6.6px;line-height:7.92px;color:#f6f6f6;font-weight:bold;transform:scaleX(0.7872);">Light scene 1</span>
<div class="b" style="left:771.30px;top:27.80px;width:12.70px;height:11.90px;background:#666;box-sizing:border-box;border:0.7px solid #7a7a7a;"></div>
<div class="b" style="left:792.20px;top:28.90px;width:70.40px;height:10.40px;background:#3a3a3a;"></div>
<div class="b" style="left:862.60px;top:28.90px;width:9.60px;height:10.40px;background:#222;"></div>
<span class="t" style="left:794.80px;top:30.24px;font-size:6.6px;line-height:7.92px;color:#f6f6f6;font-weight:bold;transform:scaleX(0.7777);">Building and outdoor pla...</span>
<div id="strip" class="b" style="left:0;top:45.7px;width:22.2px;height:496.3px;background:#222;"></div>
<div class="b" style="left:0.00px;top:45.70px;width:22.20px;height:382.80px;background:#4f4f4f;"></div>
<div id="panel" class="b" style="left:23.9px;top:45.8px;width:178px;height:496.2px;background:#303030;"></div>
<div class="b" style="left:22.20px;top:45.70px;width:1.70px;height:496.30px;background:#202020;"></div>
<div class="b" style="left:201.90px;top:45.70px;width:2.10px;height:496.30px;background:#141414;"></div>
<div class="b" style="left:23.90px;top:45.80px;width:178.00px;height:13.90px;background:#808080;box-sizing:border-box;border-top:0.6px solid #8c8c8c;"></div>
<span class="t" style="left:27.20px;top:48.80px;font-size:7.5px;line-height:9.00px;color:#fff;transform:scaleX(0.8115);">Spaces</span>
<div class="b" style="left:23.90px;top:59.70px;width:178.00px;height:68.00px;background:#606060;"></div>
<div class="b" style="left:192.50px;top:59.70px;width:9.40px;height:68.00px;background:#676767;"></div>
<div class="b" style="left:23.90px;top:77.15px;width:168.60px;height:0.70px;background:#505050;"></div>
<div class="b" style="left:23.90px;top:94.25px;width:168.60px;height:0.70px;background:#505050;"></div>
<div class="b" style="left:23.90px;top:111.25px;width:168.60px;height:0.70px;background:#505050;"></div>
<div class="b" style="left:194.30px;top:62.00px;width:6.30px;height:14.40px;background:#262626;"></div>
<span class="t" style="left:41.70px;top:65.84px;font-size:6.6px;line-height:7.92px;color:#fff;font-weight:bold;transform:scaleX(0.7856);">Draw rectangular space</span>
<span class="t" style="left:41.70px;top:82.84px;font-size:6.6px;line-height:7.92px;color:#fff;font-weight:bold;transform:scaleX(0.7777);">Draw circular space</span>
<span class="t" style="left:41.70px;top:99.74px;font-size:6.6px;line-height:7.92px;color:#fff;font-weight:bold;transform:scaleX(0.7791);">Draw polygon space</span>
<span class="t" style="left:41.70px;top:116.50px;font-size:6.5px;line-height:7.80px;color:#7c7c7c;transform:scaleX(0.8227);">Exclude subspace</span>
<div class="b" style="left:23.90px;top:127.90px;width:178.00px;height:2.00px;background:#262626;"></div>
<div class="b" style="left:23.90px;top:129.90px;width:178.00px;height:11.10px;background:#808080;"></div>
<span class="t" style="left:26.90px;top:132.04px;font-size:6.6px;line-height:7.92px;color:#fff;font-weight:bold;transform:scaleX(0.8018);">Information</span>
<div class="b" style="left:23.90px;top:141.00px;width:178.00px;height:11.40px;background:#606060;"></div>
<span class="t" style="left:26.90px;top:143.84px;font-size:6.6px;line-height:7.92px;color:#fff;font-weight:bold;transform:scaleX(0.7883);">No space selected</span>
<div id="crumbs" class="b" style="left:203.8px;top:45.9px;width:716.2px;height:13.2px;background:#5a5a5a;"></div>
<div class="b" style="left:322.90px;top:45.70px;width:41.00px;height:13.20px;background:#222;"></div>
<div class="b" style="left:364.90px;top:45.90px;width:66.10px;height:12.30px;background:#707070;"></div>
<div class="b" style="left:431.00px;top:45.70px;width:10.70px;height:13.40px;background:#222;"></div>
<span class="t" style="left:224.00px;top:49.52px;font-size:6.3px;line-height:7.56px;color:#f4f4f4;font-weight:bold;transform:scaleX(0.8522);">Gelaende 0815</span>
<span class="t" style="left:280.00px;top:49.52px;font-size:6.3px;line-height:7.56px;color:#f4f4f4;font-weight:bold;transform:scaleX(0.8108);">Buerogebaeude</span>
<span class="t" style="left:337.60px;top:49.52px;font-size:6.3px;line-height:7.56px;color:#f4f4f4;font-weight:bold;transform:scaleX(0.7710);">Keller</span>
<span class="t" style="left:384.20px;top:49.52px;font-size:6.3px;line-height:7.56px;color:#f4f4f4;font-weight:bold;transform:scaleX(0.8161);">001 - Besprechu...</span>
<div class="b" style="left:444.30px;top:46.50px;width:0.70px;height:12.50px;background:#3a3a3a;"></div>
<div class="b" style="left:447.70px;top:46.50px;width:0.70px;height:12.50px;background:#3a3a3a;"></div>
<div class="b" style="left:479.00px;top:46.50px;width:0.70px;height:12.50px;background:#3a3a3a;"></div>
<div class="b" style="left:529.80px;top:46.50px;width:0.70px;height:12.50px;background:#3a3a3a;"></div>
<div class="b" style="left:894.80px;top:46.50px;width:0.70px;height:12.50px;background:#3a3a3a;"></div>
<div class="b" style="left:451.60px;top:45.70px;width:15.80px;height:13.50px;background:#303030;box-sizing:border-box;border:0.8px solid #6a6a6a;"></div>
<div class="b" style="left:501.70px;top:45.70px;width:15.60px;height:13.50px;background:#303030;box-sizing:border-box;border:0.8px solid #6a6a6a;"></div>
<svg id="icons" width="920" height="552" viewBox="0 0 920 552">
<circle cx="10.1" cy="34.1" r="4.6" fill="none" stroke="#f2f2f2" stroke-width="0.8"/><path d="M13 34.1H8M9.8 32.2L7.6 34.1L9.8 36" stroke="#fff" stroke-width="1" fill="none"/>
<circle cx="28.8" cy="34.1" r="4.6" fill="none" stroke="#6c6c6c" stroke-width="0.8"/><path d="M26 34.1H31M29.2 32.4L31.2 34.1L29.2 35.8" stroke="#6c6c6c" stroke-width="0.9" fill="none"/>
<rect x="47.5" y="29.4" width="9.3" height="9.3" rx="0.8" fill="#35b335"/><rect x="49.1" y="29.9" width="6.6" height="5" fill="#d4d8d4"/><rect x="50.2" y="36.2" width="4.7" height="2.4" fill="#2d2d2d"/><rect x="52.9" y="36.6" width="1.1" height="1.6" fill="#ddd"/>
<path d="M66.5 35.6L69.4 32.3L69.6 33.9C72.4 33.2 74.7 34.2 75.8 36.4C73.9 35.2 72 35.1 69.9 35.6L70.2 37.1Z" fill="#37b337"/>
<path d="M93.7 35.9L91 33L90.8 34.3C88.6 33.6 86.4 33.4 85.3 34C87 34.2 88.8 34.9 90.5 35.8L90.2 37Z" fill="#3c7a3c"/>
<rect x="107" y="30.2" width="8" height="10.8" fill="#f1f1f1"/><rect x="108.4" y="31.6" width="4.2" height="3.4" fill="#bdbdbd"/><rect x="108.4" y="36" width="3" height="3.6" fill="#dcdcdc"/><path d="M117.3 34.4L112.9 39" stroke="#e0141e" stroke-width="1.5" stroke-linecap="round"/>
<path d="M150 33.2L152.6 30.6H160L157.4 33.2Z" fill="#d01818"/><path d="M150 33.2H157.4V40.2H150ZM157.4 33.2L160 30.6V37.6L157.4 40.2M152.6 30.6V37.6H160M152.6 37.6L150 40.2" fill="none" stroke="#f4f4f4" stroke-width="0.8"/>
<ellipse cx="211.4" cy="38.9" rx="4.7" ry="1.5" fill="#f6f2b8"/><path d="M208.6 37.5L210 32.6H212.6L214.8 37.5Z" fill="#6f9a2a"/><path d="M209.8 33.4L210.2 31.2H212.4L213.4 33.4Z" fill="#f2d81a"/><path d="M210.6 36.8L211.3 34.4L212.6 36.8Z" fill="#e08a1a"/>
<path d="M243.9 38.9L247 36H253.7L250.6 38.9Z" fill="#dedede"/><path d="M248.9 32V36.6" stroke="#d01818" stroke-width="1.2"/><path d="M247.5 35.6H250.3L248.9 37.6Z" fill="#d01818"/>
<path d="M315 30.5H320.2L322.4 32.8V40.7H315Z" fill="#f0f0f0"/><path d="M320.2 30.5V32.8H322.4Z" fill="#bcbcbc"/><path d="M319.6 36.8H323.6" stroke="#e0141e" stroke-width="1.5"/><path d="M323.2 34.6L326.1 36.8L323.2 39Z" fill="#e0141e"/>
<rect x="360" y="31.2" width="5.2" height="7.6" fill="#e9e9e9"/><rect x="357.8" y="32.6" width="5.2" height="7.7" fill="#f6f6f6" stroke="#9a9a9a" stroke-width="0.5"/>
<rect x="420.00" y="31.20" width="2.7" height="2" fill="#bdbdbd"/>
<rect x="420.00" y="33.60" width="2.7" height="2" fill="#cfcfcf"/>
<rect x="420.00" y="36.00" width="2.7" height="2" fill="#d8d8d8"/>
<rect x="420.00" y="38.40" width="2.7" height="2" fill="#f0de1a"/>
<rect x="423.30" y="31.20" width="2.7" height="2" fill="#3dbb3d"/>
<rect x="423.30" y="33.60" width="2.7" height="2" fill="#e8a11a"/>
<rect x="423.30" y="36.00" width="2.7" height="2" fill="#e87d1a"/>
<rect x="423.30" y="38.40" width="2.7" height="2" fill="#c8c8c8"/>
<rect x="426.60" y="31.20" width="2.7" height="2" fill="#8a8a8a"/>
<rect x="426.60" y="33.60" width="2.7" height="2" fill="#e6e6e6"/>
<rect x="426.60" y="36.00" width="2.7" height="2" fill="#d82020"/>
<rect x="426.60" y="38.40" width="2.7" height="2" fill="#1f7fe6"/>
<path d="M628.4 33.2L632 32M628.4 38.4L632 37.2" stroke="#a83030" stroke-width="1"/><path d="M632.8 31.2V33.8M632.8 36.1V38.9" stroke="#c8c8c8" stroke-width="1"/>
<path d="M642.0 33.9H645.8L643.9 36Z" fill="#fff"/>
<path d="M685.7 33.9H689.5L687.6 36Z" fill="#fff"/>
<path d="M761.6 33.9H765.4L763.5 36Z" fill="#fff"/>
<path d="M865.4 33.9H869.1999999999999L867.3 36Z" fill="#fff"/>
<path d="M654.3 37.6L657.4 33.2L661.2 31.8L659.6 35.4L655.8 37.2M656.4 34.2L658.6 36.4" stroke="#3f7f3f" stroke-width="1" fill="none"/>
<path d="M671.4 32.2L676.7 37.6M676.7 32.2L671.4 37.6" stroke="#7c7c7c" stroke-width="1.5"/>
<circle cx="701.4" cy="34.9" r="2.2" fill="none" stroke="#fff" stroke-width="1.1"/>
<path d="M704.00 34.90L705.10 34.90" stroke="#fff" stroke-width="1.1"/>
<path d="M703.24 36.74L704.02 37.52" stroke="#fff" stroke-width="1.1"/>
<path d="M701.40 37.50L701.40 38.60" stroke="#fff" stroke-width="1.1"/>
<path d="M699.56 36.74L698.78 37.52" stroke="#fff" stroke-width="1.1"/>
<path d="M698.80 34.90L697.70 34.90" stroke="#fff" stroke-width="1.1"/>
<path d="M699.56 33.06L698.78 32.28" stroke="#fff" stroke-width="1.1"/>
<path d="M701.40 32.30L701.40 31.20" stroke="#fff" stroke-width="1.1"/>
<path d="M703.24 33.06L704.02 32.28" stroke="#fff" stroke-width="1.1"/>
<rect x="774.6" y="30.4" width="6.6" height="4.6" rx="0.6" fill="none" stroke="#8a8a8a" stroke-width="0.8"/><path d="M776.4 36.4H779.4" stroke="#8a8a8a" stroke-width="0.8"/>
<path d="M884.3 37L887.2 31.8H895.3L892.4 37Z" fill="#9c9c9c"/><path d="M886 34.4H893.8M888.4 37L891.2 31.8" stroke="#666" stroke-width="0.4"/>
<path d="M905.7 37.2C907 36 906.8 34.6 906.9 33.4C907 31.6 908.1 30.6 909.35 30.6C910.6 30.6 911.7 31.6 911.8 33.4C911.9 34.6 911.7 36 913 37.2Z" fill="#fff"/><circle cx="909.35" cy="38.1" r="0.9" fill="#fff"/>
<path d="M207.5 56.9L210.6 54.3L221 52.9L218.2 56.9Z" fill="#14a514"/><path d="M209.9 50.4L211.1 49.2H214.9V53.6L213.7 54.8H209.9Z" fill="#f0f0f0"/><path d="M213.7 50.4L214.9 49.2V53.6L213.7 54.8Z" fill="#b4b4b4"/><circle cx="217.5" cy="52.2" r="1.3" fill="#ececec"/><path d="M217.5 52.4V54.8" stroke="#ddd" stroke-width="0.6"/>
<path d="M268.2 50.6L270.2 48.7H277V55L275 57H268.2Z" fill="#2aa52a"/><path d="M268.2 50.6H275V57M275 50.6L277 48.7M268.4 52.7H275M268.4 54.8H275M271.6 50.6V57" stroke="#bfe8bf" stroke-width="0.5" fill="none"/>
<path d="M325.8 50.4L327.8 48.3H334.2V54.8L332.2 57H325.8Z" fill="#2b2b2b" stroke="#f0f0f0" stroke-width="0.7"/><path d="M325.8 50.4H332.2V57M332.2 50.4L334.2 48.3" stroke="#f0f0f0" stroke-width="0.7" fill="none"/><rect x="326.4" y="51.6" width="5.4" height="1.5" fill="#2fb52f"/><rect x="326.4" y="54.2" width="5.4" height="1.5" fill="#2fb52f"/>
<path d="M357.3 51.8H360.5L358.9 53.8Z" fill="#eee"/>
<path d="M369.8 56.6L372 54.4H380L377.8 56.6Z" fill="#1fa51f"/><path d="M370 49.4V56.2M370 49.4L372.2 49V54.2M374.2 50.4V54.2M376.2 50.4V54.2M380 49.2V54.4M372.2 54.3H380" stroke="#f0f0f0" stroke-width="0.7" fill="none"/>
<path d="M434.6 52.2H438.2L436.4 54.4Z" fill="#fff"/>
<path d="M455.6 49.2V57H464M455.6 49.2H459.6V52.4H464V57M461 52.4V54.8H458" stroke="#1fae1f" stroke-width="0.9" fill="none"/>
<path d="M470.2 52.2H473.8L472 54.2Z" fill="#9a9a9a"/>
<path d="M487.1 50.4H494.2V57.2H487.1Z" fill="#3ab43a"/><path d="M487.1 50.4L489.2 48.3H496.3L494.2 50.4Z" fill="#50cf50"/><path d="M494.2 50.4L496.3 48.3V55.1L494.2 57.2Z" fill="#1c861c"/>
<path d="M505.4 48.8H509.2V53.2H513.8V57H505.4Z" fill="#2cc02c" stroke="#176f17" stroke-width="0.5"/>
<path d="M520.6 50.6L523.4 52.9L520.6 55.2Z" fill="#9a9a9a"/>
<path d="M539.8 51V48.4H542.4M547.8 48.4H550.4V51M550.4 55.2V57.8H547.8M542.4 57.8H539.8V55.2" stroke="#f2f2f2" stroke-width="0.9" fill="none"/><rect x="542.6" y="50.8" width="5" height="4.6" rx="0.8" fill="#f2f2f2"/>
<path d="M560.8 50.4H571.2M560.8 48.8V52M571.2 48.8V52M562.6 49.2L560.9 50.4L562.6 51.6M569.4 49.2L571.1 50.4L569.4 51.6" stroke="#f2f2f2" stroke-width="0.8" fill="none"/><path d="M560.8 57.4V54.6H571.2V57.4M563.4 54.6V56.6M566 54.6V56.6M568.6 54.6V56.6" stroke="#d0d0d0" stroke-width="0.7" fill="none"/>
<path d="M583.4 54.6V49.6M582.2 50.8L583.4 48.6L584.6 50.8" stroke="#f2f2f2" stroke-width="0.9" fill="none"/><circle cx="583.4" cy="56.6" r="0.9" fill="#f2f2f2"/><path d="M585.6 56.6H590M589 55.4L591.2 56.6L589 57.8" stroke="#f2f2f2" stroke-width="0.9" fill="none"/>
<rect x="904" y="49.6" width="8.6" height="5.4" rx="0.8" fill="none" stroke="#f2f2f2" stroke-width="0.9"/><path d="M906.4 56.6H910.2" stroke="#f2f2f2" stroke-width="0.9"/>
<rect x="30.6" y="65" width="4.6" height="8.4" rx="0.6" fill="none" stroke="#d68a1a" stroke-width="0.8"/>
<circle cx="32.4" cy="86.4" r="4.2" fill="none" stroke="#d68a1a" stroke-width="0.8"/>
<path d="M29.7 98.5H35.1L34.4 101.4L36.2 103.4V105.6L35 107.7H29.7Z" fill="none" stroke="#d68a1a" stroke-width="0.9"/>
<path d="M28.6 114.8H37.2V124.8H28.6ZM32.2 114.8V124.8M33.6 114.8V124.8" fill="none" stroke="#70593f" stroke-width="0.7"/>
<path d="M196 70L197.3 68.4L198.6 70Z" fill="#fff"/>
<rect x="0" y="67.0" width="22.6" height="0.7" fill="#3c3c3c"/>
<rect x="0" y="112.9" width="22.6" height="0.7" fill="#3c3c3c"/>
<rect x="0" y="135.1" width="22.6" height="0.7" fill="#3c3c3c"/>
<rect x="0" y="157.2" width="22.6" height="0.7" fill="#3c3c3c"/>
<rect x="0" y="225.5" width="22.6" height="0.7" fill="#3c3c3c"/>
<rect x="0" y="248.0" width="22.6" height="0.7" fill="#3c3c3c"/>
<rect x="0" y="270.5" width="22.6" height="0.7" fill="#3c3c3c"/>
<rect x="0" y="316.0" width="22.6" height="0.7" fill="#3c3c3c"/>
<rect x="0" y="362.4" width="22.6" height="0.7" fill="#3c3c3c"/>
<rect x="0" y="384.0" width="22.6" height="0.7" fill="#3c3c3c"/>
<rect x="0" y="405.7" width="22.6" height="0.7" fill="#3c3c3c"/>
<rect x="0" y="89.8" width="22.6" height="1.70" fill="#262626"/>
<rect x="0" y="202.8" width="22.6" height="1.70" fill="#262626"/>
<rect x="0" y="292.2" width="22.6" height="1.80" fill="#262626"/>
<rect x="0" y="338.5" width="22.6" height="2.00" fill="#262626"/>
<path d="M6.8 50.3H13.4L16.6 53.5V63.099999999999994H6.8Z" fill="#f0f0f0"/><path d="M13.4 50.3V53.5H16.6Z" fill="#bdbdbd"/><rect x="5.9" y="57.3" width="11.3" height="4.2" fill="#1b6fe0"/>
<text x="8" y="60.699999999999996" font-size="3" fill="#fff" font-weight="bold" textLength="7" lengthAdjust="spacingAndGlyphs">DWG</text>
<path d="M6.8 72.3H13.4L16.6 75.5V85.1H6.8Z" fill="#f0f0f0"/><path d="M13.4 72.3V75.5H16.6Z" fill="#bdbdbd"/><rect x="5.9" y="79.3" width="11.3" height="4.2" fill="#d01818"/>
<text x="8" y="82.7" font-size="3" fill="#fff" font-weight="bold" textLength="7" lengthAdjust="spacingAndGlyphs">IFC</text>
<path d="M4.4 106.9L7.4 104.7L18 102.8L15.2 106.9Z" fill="#d81818"/><path d="M6.8 100.2L8 99H12.4V103.6L11.2 104.9H6.8Z" fill="#ececec"/><path d="M11.2 100.2L12.4 99V103.6L11.2 104.9Z" fill="#b0b0b0"/><path d="M9 100.2V104.9M6.8 102.5H11.2" stroke="#c8c8c8" stroke-width="0.4"/><circle cx="14.8" cy="102.1" r="1.3" fill="#e8e8e8"/><path d="M14.8 102.4V105" stroke="#ddd" stroke-width="0.6"/>
<path d="M4.4 121.2L7.6 118.2H18V128L15 131.1H4.4Z" fill="#4a1414"/>
<path d="M4.4 121.4L7.6 118.2H18L15 121.4Z" fill="#e01a1a"/><path d="M4.4 126L7.6 123.2H18L15 126Z" fill="#d01818"/><path d="M4.4 131.1L7.6 128.2H18L15 131.1Z" fill="#e01a1a"/>
<path d="M4.4 121.4V131.1M15 121.4V131.1M18 118.2V128.2" stroke="#d8d8d8" stroke-width="0.7"/><path d="M8 122.4H12.6M8 124.6H12.6M8 127.2H12.6M8 129H12.6" stroke="#a01818" stroke-width="0.6"/>
<rect x="6.2" y="140" width="9" height="10.2" rx="1" fill="none" stroke="#cfcfcf" stroke-width="0.9"/><path d="M9.6 143.6L16.8 140V149.6L9.6 153.2Z" fill="#b81616" fill-opacity="0.92" stroke="#f02020" stroke-width="0.7"/>
<rect x="6.8" y="162.8" width="7.6" height="9.2" fill="#c01818" stroke="#d8d8d8" stroke-width="0.6"/><path d="M9.6 166L16.4 162.4V172.4L9.6 175.6Z" fill="#c43030" fill-opacity="0.85" stroke="#e6e6e6" stroke-width="0.8"/>
<rect x="0.6" y="180.6" width="21.2" height="21" fill="#262626" stroke="#8a8a8a" stroke-width="0.8"/>
<path d="M5 184.4H10.4V197.6H5Z" fill="none" stroke="#f0f0f0" stroke-width="0.8"/><path d="M5 197.6H12" stroke="#f0f0f0" stroke-width="0.8"/><rect x="9.4" y="188.4" width="10.4" height="10.4" fill="#b81414" fill-opacity="0.75"/><rect x="9.4" y="188.4" width="10.4" height="10.4" fill="none" stroke="#f02020" stroke-width="0.9" stroke-dasharray="2.4 1.4"/><path d="M11.6 192.4H17.6M11.6 195H17.6M13.6 190.6V196.8M15.8 190.6V196.8" stroke="#e86060" stroke-width="0.5"/>
<path d="M4.4 210.3H14.4V220.7H4.4ZM4.4 210.3L7.4 207.5H17.4V217.9L14.4 220.7M14.4 210.3L17.4 207.5M7.4 207.5V217.9H17.4M7.4 217.9L4.4 220.7" fill="none" stroke="#d6d6d6" stroke-width="0.7"/>
<rect x="10" y="208.8" width="2.4" height="10.4" fill="#e01a1a"/>
<path d="M4.4 233.0H14.4V243.39999999999998H4.4ZM4.4 233.0L7.4 230.2H17.4V240.6L14.4 243.39999999999998M14.4 233.0L17.4 230.2M7.4 230.2V240.6H17.4M7.4 240.6L4.4 243.39999999999998" fill="none" stroke="#d6d6d6" stroke-width="0.7"/>
<path d="M4.4 233L11.4 229.4L17.4 231.6L14.4 234.6Z" fill="#d01818"/>
<path d="M4.4 254.8H14.4V265.2H4.4ZM4.4 254.8L7.4 252H17.4V262.4L14.4 265.2M14.4 254.8L17.4 252M7.4 252V262.4H17.4M7.4 262.4L4.4 265.2" fill="none" stroke="#d6d6d6" stroke-width="0.7"/>
<path d="M4.4 256.4H14.4L17.4 253.6V255.8L14.4 258.6H4.4Z" fill="#d01818"/>
<path d="M4.4 278L7.2 275.2H17.4V285.6L14.6 288.4H4.4Z" fill="#bdbdbd"/><rect x="4.4" y="278" width="10.2" height="10.4" fill="#d9d9d9" stroke="#8a8a8a" stroke-width="0.5"/><rect x="6.4" y="280" width="5.6" height="5.6" fill="#a8a8a8"/><rect x="7.6" y="281" width="2.4" height="2.2" fill="#d01818"/>
<path d="M4.4 303.4L7.6 300.8H18V302.8L15 305.4H4.4Z" fill="#f2f2f2"/><path d="M4.4 305.4V309.4H6V305.4M15 305.4V309.4H16.4V304.4M18 302.8V306.6H16.8" fill="#9a9a9a" stroke="#cfcfcf" stroke-width="0.5"/><rect x="6" y="305.4" width="9" height="3" fill="#2e2e2e"/>
<path d="M4.8 326.6L11.4 321L18 323.4L17.4 326.4L11.6 331.8Z" fill="#9a9a9a"/><path d="M13.6 321.4L18 322.4V327L16 325.2Z" fill="#e01a1a"/><path d="M15.4 322.6H17.4V325" fill="#f6f6f6"/><path d="M6.6 325.2L12.8 330.6M8.4 323.8L14.2 329.2M10.2 322.4L15.6 327.8" stroke="#6a6a6a" stroke-width="0.5"/>
<rect x="4.6" y="345" width="6.4" height="6" fill="#f2f2f2"/><path d="M6 346.4H9.6M7.8 346.4V350" stroke="#d01818" stroke-width="1"/><path d="M8.8 356.8C11 353.4 12.6 357.6 14.4 355.6C15.6 354.2 16.4 353.6 17.2 353" stroke="#f0f0f0" stroke-width="0.8" fill="none"/><circle cx="8.8" cy="357" r="1.1" fill="#e01a1a"/><circle cx="17.2" cy="352.8" r="1.1" fill="#e01a1a"/>
<path d="M4.2 368H18" stroke="#e01a1a" stroke-width="1.1"/><rect x="5" y="370.4" width="5" height="8.2" fill="#e2e2e2"/><rect x="6" y="371.4" width="3" height="6.2" fill="#fafafa"/><path d="M12.8 374.4H17.2M15 372.2V376.6" stroke="#e01a1a" stroke-width="1.1"/>
<rect x="6.2" y="391" width="9.8" height="8.4" fill="#3a3a3a" stroke="#c8c8c8" stroke-width="1"/><path d="M9 395.2H13.2M11.1 393.2V397.2" stroke="#e01a1a" stroke-width="1"/><path d="M4.4 391V389.4H6M16.4 389.4H18V391M18 399.6V401.2H16.4M6 401.2H4.4V399.6" stroke="#e01a1a" stroke-width="0.8" fill="none"/>
<rect x="6.2" y="411.4" width="2.6" height="2.6" fill="#f0f0f0"/><rect x="6.2" y="416.2" width="2.6" height="2.6" fill="#f0f0f0"/><rect x="6.2" y="420.8" width="2.8" height="2.8" fill="#f0f0f0"/><rect x="13.2" y="420.8" width="2.8" height="2.8" fill="#f0f0f0"/><path d="M7.5 414V416.2M7.5 418.8V420.8" stroke="#d0d0d0" stroke-width="0.6"/><path d="M9 417.6H13.4C14.6 417.6 14.8 418.6 14.8 420.4" stroke="#e01a1a" stroke-width="0.9" fill="none"/>
</svg>
<div id="dropdown" class="b" style="left:327.3px;top:59.2px;width:114.7px;height:193px;background:#4f4f4f;box-shadow:0.8px 0.8px 1.5px rgba(0,0,0,0.4);"></div>
<span class="t" style="left:341.30px;top:62.50px;font-size:7px;line-height:8.40px;color:#fff;transform:scaleX(0.8656);">001 - Besprechungsraum I</span>
<span class="t" style="left:341.30px;top:73.75px;font-size:7px;line-height:8.40px;color:#fff;transform:scaleX(0.8656);">002 - Besprechungsraum II</span>
<span class="t" style="left:341.30px;top:85.00px;font-size:7px;line-height:8.40px;color:#fff;transform:scaleX(0.8656);">003 - Technikraum I</span>
<span class="t" style="left:341.30px;top:96.25px;font-size:7px;line-height:8.40px;color:#fff;transform:scaleX(0.8656);">004 - Technikraum II</span>
<span class="t" style="left:341.30px;top:107.50px;font-size:7px;line-height:8.40px;color:#fff;transform:scaleX(0.8656);">005 - Technikraum III</span>
<span class="t" style="left:341.30px;top:118.75px;font-size:7px;line-height:8.40px;color:#fff;transform:scaleX(0.8656);">006 - Seminarraum</span>
<span class="t" style="left:341.30px;top:130.00px;font-size:7px;line-height:8.40px;color:#fff;transform:scaleX(0.8656);">007 - Technikraum IV</span>
<span class="t" style="left:341.30px;top:141.25px;font-size:7px;line-height:8.40px;color:#fff;transform:scaleX(0.8656);">008 - WC Herren</span>
<span class="t" style="left:341.30px;top:152.50px;font-size:7px;line-height:8.40px;color:#fff;transform:scaleX(0.8656);">009 - WC Damen</span>
<span class="t" style="left:341.30px;top:163.75px;font-size:7px;line-height:8.40px;color:#fff;transform:scaleX(0.8656);">010 - Labor K1</span>
<span class="t" style="left:341.30px;top:175.00px;font-size:7px;line-height:8.40px;color:#fff;transform:scaleX(0.8656);">011 - Labor K2</span>
<span class="t" style="left:341.30px;top:186.25px;font-size:7px;line-height:8.40px;color:#fff;transform:scaleX(0.8656);">012 - Labor K3</span>
<span class="t" style="left:341.30px;top:197.50px;font-size:7px;line-height:8.40px;color:#fff;transform:scaleX(0.8656);">013 - Labor K4</span>
<span class="t" style="left:341.30px;top:208.75px;font-size:7px;line-height:8.40px;color:#fff;transform:scaleX(0.8656);">014 - Labor K5</span>
<span class="t" style="left:341.30px;top:220.00px;font-size:7px;line-height:8.40px;color:#fff;transform:scaleX(0.8656);">015 - Flur Keller West</span>
<span class="t" style="left:341.30px;top:231.25px;font-size:7px;line-height:8.40px;color:#fff;transform:scaleX(0.8656);">016 - Flur Keller Treppe</span>
<span class="t" style="left:341.30px;top:242.50px;font-size:7px;line-height:8.40px;color:#fff;transform:scaleX(0.8656);">017 - Flur Keller Ost</span>
<div id="status" class="b" style="left:0;top:541.9px;width:920px;height:10.1px;background:#404040;box-sizing:border-box;border-top:0.9px solid #2b2b2b;"></div>
<span class="t" style="left:3.90px;top:544.92px;font-size:6.8px;line-height:8.16px;color:#e4e4e4;transform:scaleX(0.7343);">DIAL</span>
<span class="t" style="left:15.00px;top:544.92px;font-size:6.8px;line-height:8.16px;color:#fff;font-weight:bold;transform:scaleX(0.9830);">ux</span>
<span class="t" style="left:24.40px;top:544.92px;font-size:6.8px;line-height:8.16px;color:#e4e4e4;transform:scaleX(0.7753);">evo</span>
<span class="t" style="left:842.00px;top:544.04px;font-size:6.6px;line-height:7.92px;color:#fff;font-weight:bold;transform:scaleX(0.8446);">0 new messages</span>
<div class="b" style="left:888.40px;top:544.40px;width:26.40px;height:6.40px;background:#444;box-sizing:border-box;border:0.8px solid #cfcfcf;border-radius:1px;"></div>
<svg width="920" height="552" viewBox="0 0 920 552"><path d="M826.2 544.4h5.2l0.9 0.9v5.3h-6.1z" fill="#f2f2f2"/><rect x="827.6" y="544.4" width="3" height="2" fill="#444"/></svg>
</body></html>
